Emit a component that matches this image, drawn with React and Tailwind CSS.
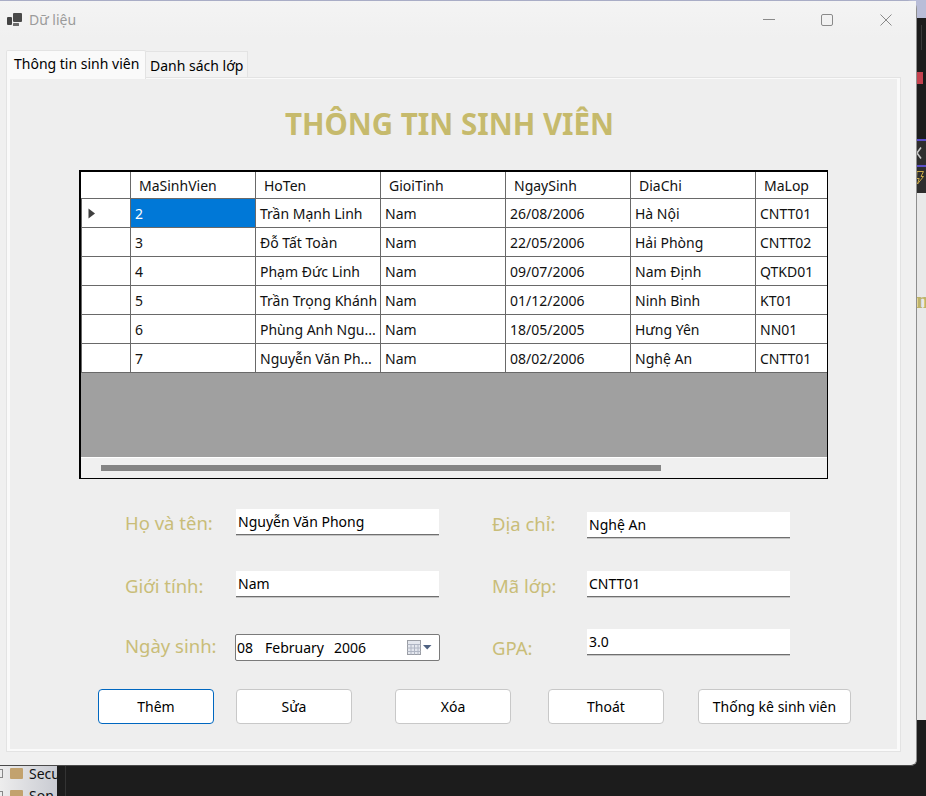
const FONT = "font-['Noto_Sans','Open_Sans',sans-serif]";

const columns = ["MaSinhVien", "HoTen", "GioiTinh", "NgaySinh", "DiaChi", "MaLop"];
const rows = [
  ["2", "Trần Mạnh Linh", "Nam", "26/08/2006", "Hà Nội", "CNTT01"],
  ["3", "Đỗ Tất Toàn", "Nam", "22/05/2006", "Hải Phòng", "CNTT02"],
  ["4", "Phạm Đức Linh", "Nam", "09/07/2006", "Nam Định", "QTKD01"],
  ["5", "Trần Trọng Khánh", "Nam", "01/12/2006", "Ninh Bình", "KT01"],
  ["6", "Phùng Anh Ngu...", "Nam", "18/05/2005", "Hưng Yên", "NN01"],
  ["7", "Nguyễn Văn Ph...", "Nam", "08/02/2006", "Nghệ An", "CNTT01"],
];
const gridCols = "grid grid-cols-[50px_125px_125px_125px_125px_125px_71px]";

function AppIcon() {
  return (
    <svg width="17" height="15" viewBox="0 0 17 15" className="ml-[6px] mr-[6px] shrink-0">
      <rect x="7" y="1" width="9" height="9" rx="1" fill="#4a4a4a" />
      <rect x="1" y="5" width="5" height="8" rx="1" fill="#444444" />
      <rect x="7" y="11" width="6" height="3" rx="0.5" fill="#6a6a6a" />
    </svg>
  );
}

function TitleBar() {
  return (
    <div className="flex h-[37px] shrink-0 items-center bg-gradient-to-b from-[#f4f4f4] to-[#f0f0f0]">
      <AppIcon />
      <span className="text-[14px] leading-[36px] text-[#9b9b9b]">Dữ liệu</span>
      <div className="ml-auto flex items-center pr-[24px]">
        <svg width="12" height="12" viewBox="0 0 12 12" className="mr-[46px]">
          <path d="M0 5.5H12" stroke="#8a8a8a" strokeWidth="1" />
        </svg>
        <svg width="12" height="12" viewBox="0 0 12 12" className="mr-[47px]">
          <rect x="0.5" y="0.5" width="11" height="11" rx="1.5" fill="none" stroke="#8a8a8a" strokeWidth="1" />
        </svg>
        <svg width="12" height="12" viewBox="0 0 12 12">
          <path d="M0.5 0.5L11.5 11.5M11.5 0.5L0.5 11.5" stroke="#8a8a8a" strokeWidth="1" />
        </svg>
      </div>
    </div>
  );
}

function Tabs() {
  return (
    <div className="mt-[12px] flex items-end pl-[6px]">
      <div className="relative z-10 -mb-[2px] h-[29px] w-[140px] rounded-t-[2px] border border-b-0 border-[#e3e3e3] bg-[#fafafa] pl-[7px] text-[14px] leading-[25px] text-black">
        Thông tin sinh viên
      </div>
      <div className="h-[26px] w-[102px] border border-b-0 border-l-0 border-[#e3e3e3] bg-[#f3f3f3] pl-[4px] text-[14px] leading-[27px] text-black">
        Danh sách lớp
      </div>
    </div>
  );
}

function DataGrid() {
  return (
    <div className="ml-[69px] w-[749px] border-2 border-r border-b border-black bg-white text-[14px] text-[#111]">
      <div className={`${gridCols} h-[27px] border-b border-[#696969]`}>
        <div className="border-r border-[#696969]" />
        {columns.map((c, i) => (
          <div
            key={c}
            className={`pl-[8px] leading-[28px] ${i < 5 ? "border-r border-[#696969]" : ""}`}
          >
            {c}
          </div>
        ))}
      </div>
      {rows.map((row, r) => (
        <div key={row[0]} className={`${gridCols} h-[29px] border-b border-[#696969]`}>
          <div className="flex items-center border-x border-[#696969] pl-[6px]">
            {r === 0 && (
              <svg width="8" height="11" viewBox="0 0 8 11">
                <path d="M0.5 0.5L7 5.5L0.5 10.5Z" fill="#3f3f3f" />
              </svg>
            )}
          </div>
          {row.map((cell, i) => (
            <div
              key={i}
              className={`overflow-hidden whitespace-nowrap pl-[4px] leading-[29px] ${
                i < 5 ? "border-r border-[#696969]" : ""
              } ${r === 0 && i === 0 ? "bg-[#0078d7] text-white" : ""}`}
            >
              {cell}
            </div>
          ))}
        </div>
      ))}
      <div className="h-[84px] bg-[#a0a0a0]" />
      <div className="h-[21px] border-t border-white bg-[#f0f0f0] pl-[20px] pt-[7px]">
        <div className="h-[6px] w-[560px] bg-[#858585]" />
      </div>
    </div>
  );
}

function TextField({ value }) {
  return (
    <input
      readOnly
      value={value}
      className="block h-[26px] w-[203px] shrink-0 border-b border-[#6f6f6f] bg-white pb-px pl-[2px] text-[14px] text-black shadow-[0_1px_0_#c4c4c4] outline-none"
    />
  );
}

function FieldLabel({ children, className }) {
  return <div className={`shrink-0 text-[18.5px] leading-[26px] text-[#c9bd78] ${className}`}>{children}</div>;
}

function DateField() {
  return (
    <div className="-ml-px flex h-[27px] w-[205px] shrink-0 items-center rounded-[2px] border border-[#7a7a7a] bg-white pl-[1px] text-[14px] text-black">
      <span className="w-[28px]">08</span>
      <span className="w-[57px] whitespace-pre">February</span>
      <span className="ml-[12px]">2006</span>
      <svg width="25" height="16" viewBox="0 0 25 16" className="ml-auto mr-[7px]">
        <rect x="0.5" y="0.5" width="13" height="14" fill="#e4e7ee" stroke="#9a9da4" />
        <path d="M0.5 4.5H13.5M0.5 8H13.5M0.5 11.5H13.5M4 4.5V14.5M7.5 4.5V14.5M11 4.5V14.5" stroke="#b0b6c4" strokeWidth="1" fill="none" />
        <path d="M16 5H24.5L20.2 9.5Z" fill="#4f6282" />
      </svg>
    </div>
  );
}

function Form() {
  return (
    <div className="ml-[115px] mt-[30px] flex">
      <div className="w-[314px]">
        <div className="flex h-[26px]">
          <FieldLabel className="mt-px w-[111px]">Họ và tên:</FieldLabel>
          <TextField value="Nguyễn Văn Phong" />
        </div>
        <div className="mt-[36px] flex h-[26px]">
          <FieldLabel className="mt-[2px] w-[111px]">Giới tính:</FieldLabel>
          <TextField value="Nam" />
        </div>
        <div className="mt-[37px] flex h-[27px]">
          <FieldLabel className="-mt-px w-[111px]">Ngày sinh:</FieldLabel>
          <DateField />
        </div>
      </div>
      <div className="ml-[53px]">
        <div className="mt-[3px] flex h-[26px]">
          <FieldLabel className="-mt-px w-[95px]">Địa chỉ:</FieldLabel>
          <TextField value="Nghệ An" />
        </div>
        <div className="mt-[33px] flex h-[26px]">
          <FieldLabel className="mt-[2px] w-[95px]">Mã lớp:</FieldLabel>
          <TextField value="CNTT01" />
        </div>
        <div className="mt-[32px] flex h-[26px]">
          <FieldLabel className="mt-[6px] w-[95px]">GPA:</FieldLabel>
          <TextField value="3.0" />
        </div>
      </div>
    </div>
  );
}

function Btn({ children, className = "", primary }) {
  return (
    <button
      className={`h-[35px] rounded-[4px] border bg-white text-[14px] text-black ${
        primary ? "border-[#0067c0]" : "border-[#c8c8c8]"
      } ${className}`}
    >
      {children}
    </button>
  );
}

function Buttons() {
  return (
    <div className="ml-[88px] mt-[28px] flex">
      <Btn primary className="w-[116px]">Thêm</Btn>
      <Btn className="ml-[22px] w-[116px]">Sửa</Btn>
      <Btn className="ml-[43px] w-[116px]">Xóa</Btn>
      <Btn className="ml-[37px] w-[116px]">Thoát</Btn>
      <Btn className="ml-[34px] w-[153px]">Thống kê sinh viên</Btn>
    </div>
  );
}

function TreeRow({ label }) {
  return (
    <div className="flex h-[22px] items-center whitespace-nowrap">
      <span className="mr-[7px] h-[9px] w-[3px] shrink-0 border border-l-0 border-[#888]" />
      <span className="mr-[6px] h-[11px] w-[13px] shrink-0 rounded-[1px] bg-[#c2a26e]" />
      {label}
    </div>
  );
}

function Backdrop() {
  return (
    <>
      <div className="absolute right-0 top-0 h-[18px] w-[40px] bg-[#b9bdd8]" />
      <div className="absolute left-[921px] top-[25px] h-[25px] w-px bg-[#3a3a3a]" />
      <div className="absolute left-[916px] top-[72px] h-[12px] w-[7px] bg-[#c5424f]" />
      <div className="absolute left-[916px] top-[139px] h-[28px] w-[10px] border-y-2 border-[#5a4fc8] bg-[#2e2e2e]">
        <svg width="10" height="24" viewBox="0 0 10 24" className="block">
          <path d="M5 6.5L1 12L5 17.5" fill="none" stroke="#c8c8c8" strokeWidth="1.6" />
        </svg>
      </div>
      <div className="absolute left-[916px] top-[167px] h-[26px] w-[10px] bg-[#2e2e2e]">
        <svg width="10" height="26" viewBox="0 0 10 26" className="block">
          <path d="M1 4.5H7.5L5 9.5H7.5L1.5 17L3.2 11.5H0.5Z" fill="none" stroke="#c9a94a" strokeWidth="1" />
        </svg>
      </div>
      <div className="absolute left-[916px] top-[193px] h-[527px] w-[10px] overflow-hidden bg-[#e9e9e9] font-['Liberation_Serif',serif] text-[24px] font-bold leading-[26px] text-[#bdb36a]">
        <div className="mt-[94px] whitespace-nowrap">n</div>
      </div>
      <div className="absolute left-0 top-[765px] h-[31px] w-[57px] overflow-hidden bg-gradient-to-r from-[#ededed] to-[#c9cbd2] text-[14px] text-[#111]">
        <div className="-mt-[3px]">
          <TreeRow label="Secu" />
          <TreeRow label="Son" />
        </div>
      </div>
      <div className="absolute left-[65px] top-[765px] h-[31px] w-px bg-[#333]" />
    </>
  );
}

export default function App() {
  return (
    <div className={`relative h-[796px] w-[926px] overflow-hidden bg-[#1c1c1c] ${FONT}`}>
      <Backdrop />
      <div className="absolute left-0 top-0 flex h-[766px] w-[917px] flex-col rounded-tr-[9px] rounded-br-[6px] border-t border-r border-b border-t-[#a9adc6] border-r-[#8e8e8e] border-b-[#4a4a4a] bg-[#f0f0f0]">
        <TitleBar />
        <Tabs />
        <div className="ml-[6px] h-[675px] w-[895px] border border-[#e3e3e3] bg-[#fafafa] px-[3px] pb-[2px] pt-px">
          <div className="h-full bg-[#eeeeee]">
            <div className="pt-[25px] pr-[8px] text-center text-[29.5px] font-bold leading-[40px] text-[#c6ba6c]">
              THÔNG TIN SINH VIÊN
            </div>
            <div className="mt-[26px]">
              <DataGrid />
            </div>
            <Form />
            <Buttons />
          </div>
        </div>
      </div>
    </div>
  );
}
